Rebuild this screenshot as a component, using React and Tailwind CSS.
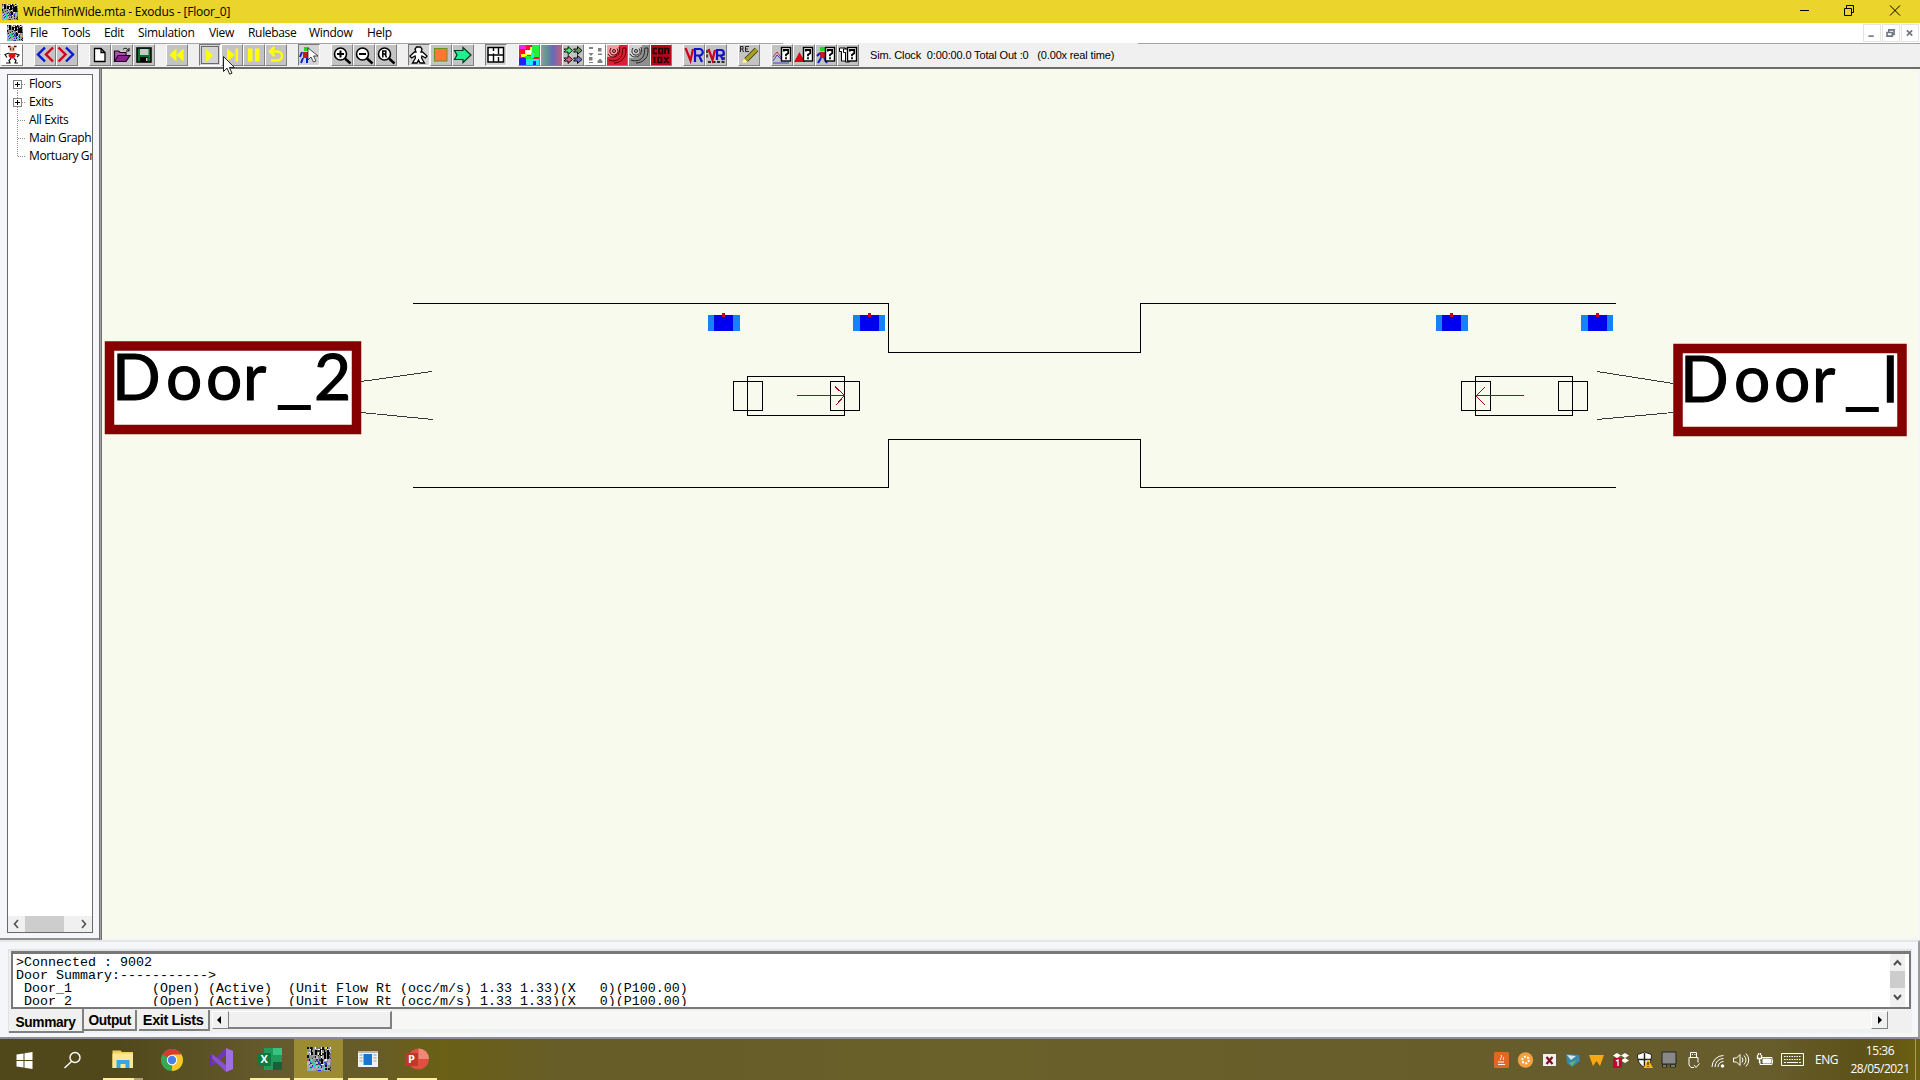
import React from "react";

const NOISE = ["#111", "#888", "#bbb", "#999", "#fff", "#333", "#777", "#aaa", "#a8a8b0", "#909090"];

function ExodusIcon({ size }) {
  const cells = [];
  for (let y = 0; y < 16; y++) {
    for (let x = 0; x < 16; x++) {
      const r = Math.abs(Math.sin(x * 12.9898 + y * 78.233) * 43758.5453);
      const f = r - Math.floor(r);
      let c = NOISE[Math.floor(f * 10)];
      if (y < 4 && x > 5 && f > 0.7) c = "#e8e030";
      if (y > 9 && x < 9 && f < 0.12) c = "#2030e0";
      if (y > 8 && f > 0.88) c = "#20e0c0";
      if (y > 11 && f > 0.3 && f < 0.6) c = "#a0a4ac";
      cells.push(<rect key={x + "-" + y} x={x} y={y} width="1" height="1" fill={c} />);
    }
  }
  return (
    <svg width={size} height={size} viewBox="0 0 16 16" shapeRendering="crispEdges" className="shrink-0">
      {cells}
      <path d="M3 1v4M6 2v3M9 1v5M12 3v5M14 2v6M10 8v3" stroke="#000" strokeWidth="1.2" />
      <path d="M2 9l4 3M4 14l2-3" stroke="#1fd8a8" fill="none" />
      <path d="M7 9l3 4M12 10l1 2" stroke="#2a35ff" fill="none" />
    </svg>
  );
}

const Mag = ({ children }) => (
  <>
    <circle cx="8.5" cy="9" r="6" fill="#fff" stroke="#000" strokeWidth="1.6" />
    <path d="M13 13.5l5.5 5" stroke="#000" strokeWidth="2.4" />
    {children}
  </>
);
const Query = ({ x = 9.5 }) => (
  <>
    <rect x={x} y="2.5" width="9" height="13.500" fill="#fff" stroke="#000" strokeWidth="1.4" />
    <path d={`M${x + 2.3} 6.5v-1.500h4.400v3.200l-2.200 1.500v1.500M${x + 4.5} 12.300v1.900`} stroke="#000" strokeWidth="1.8" fill="none" />
  </>
);
const Spiral = ({ c }) => (
  <g fill="none" stroke={c} strokeWidth="1">
    <circle cx="7" cy="6" r="1.500" />
    <path d="M10 3.500c3 4-1 7-4 6.500s-4-4-2-7M12 2c2 6-2 10-6 10-2 0-4-1-5-3M16 3h3M16 3c-1 3 0 6-2 9s-7 5-12 3M19 3c0 4 0 8-3 11s-6 4-9 4" />
  </g>
);

const ICONS = {
  runner: (
    <>
      <path d="M7.500 1.500h5v5h-5z" fill="#d8a078" />
      <path d="M6 1.500h2.500M12 1.500h2.500M8 4h1M11 4h1" stroke="#400" strokeWidth="1.300" />
      <path d="M7 8h6l.5 3-1.500 2.500H8.500L6.500 11z" fill="#e01020" />
      <path d="M7 8l-4 1.500 2 3M13 8.500l4 1.500-2 2M9 13.500l-2 2 1 2.500H4M12 13.500l2 2-1 2.500h3" stroke="#111" strokeWidth="1.200" fill="none" />
    </>
  ),
  back: (
    <>
      <path d="M10 2.500L3 9.500l7 7" stroke="#0018d8" strokeWidth="2.400" fill="none" />
      <path d="M18 2.500L11 9.500l7 7" stroke="#d00018" strokeWidth="2.400" fill="none" />
    </>
  ),
  fwd: (
    <>
      <path d="M1.500 2.500l7 7-7 7" stroke="#d00018" strokeWidth="2.400" fill="none" />
      <path d="M9 2.500l7 7-7 7" stroke="#0018d8" strokeWidth="2.400" fill="none" />
    </>
  ),
  doc: <path d="M4.500 3.500h6.500l4 4v9h-10.500zM11 3.500v4h4" fill="#fff" stroke="#000" strokeWidth="1.300" />,
  open: (
    <>
      <path d="M2.500 16V6h4l1.500 1.500h6V10" fill="#b050b0" stroke="#200020" strokeWidth="1.200" />
      <path d="M2.500 16.500L6 10.500h12l-4 6z" fill="#8a2090" stroke="#200020" strokeWidth="1.200" />
      <path d="M11 4.500c2-2 4-1.500 5.500 1M17 3v3h-3" stroke="#000" fill="none" />
    </>
  ),
  save: (
    <>
      <rect x="3" y="3" width="14" height="14" fill="#087028" stroke="#000" strokeWidth="1.500" />
      <rect x="6" y="4" width="8.500" height="6" fill="#c8c8c8" />
      <path d="M6 12h8v5H6z" fill="#000" />
      <path d="M12 13h1.500v3H12z" fill="#ccc" />
    </>
  ),
  rew: <path d="M9.500 3.500v13l-7-6.500zM16.500 3.500v13l-7-6.500z" fill="#ffff00" />,
  play: (
    <>
      <rect x="1.500" y="1.500" width="17" height="17" fill="none" stroke="#000" strokeDasharray="1 1" />
      <path d="M6 4l7 6.500-7 6.500z" fill="#ffff00" />
    </>
  ),
  step: <path d="M5 3.500l8 6.500-8 6.500zM13.500 3.500h2.500v13H13.500z" fill="#ffff00" />,
  pause: <path d="M4 3.500h4.500v13H4zM11 3.500h4.500v13H11z" fill="#ffff00" />,
  reload: <path d="M5 6.500h6.500a4.300 4.300 0 010 9H5M8.500 2l-4.500 4.500L8.500 11" fill="none" stroke="#ffff00" strokeWidth="2.600" />,
  pick: (
    <>
      <path d="M5 2h5v4H5z" fill="#20d820" />
      <path d="M4 7h5v6H4z" fill="#d01030" />
      <path d="M3 7l-2 5M4 13l-2 5M8 13v5" stroke="#0020d0" strokeWidth="2" />
      <path d="M9 3v12l3-3 2.500 5 2.500-1-2.500-5H19z" fill="#fff" stroke="#222" strokeWidth=".8" />
    </>
  ),
  zin: <Mag><path d="M5 9h7M8.500 5.500v7" stroke="#000" strokeWidth="2" /></Mag>,
  zout: <Mag><path d="M5 9h7" stroke="#000" strokeWidth="2" /></Mag>,
  zr: <Mag><path d="M6.800 12.500V6h3v3h-3M9 9l1.500 3.500" stroke="#000" strokeWidth="1.500" fill="none" /></Mag>,
  person: (
    <path d="M7.500 2h4l1.500 2-1 3h1.500l4.500 4-1.500 2-3.500-2-.5 2 3 5h-4.500L9.500 15 8 18H3.500l3-5-.5-2-3.500 2L1 11l4.500-4h1.500l-1-3z" fill="#fff" stroke="#000" strokeWidth="1.300" />
  ),
  orange: <rect x="3.500" y="3.500" width="12.500" height="12.500" fill="#ff7830" stroke="#6a9020" strokeWidth="1" />,
  arrow: <path d="M1.500 5.500H10V2.500l8 7.500-8 7.500v-3H1.500L4 10z" fill="#20f090" stroke="#003820" strokeWidth="1.200" />,
  plan: (
    <>
      <rect x="2" y="2.500" width="15.500" height="14.500" fill="#fff" stroke="#000" strokeWidth="1.500" />
      <path d="M2 10h15.500M7.500 2v4M7.500 8.500V17M12.500 2v7M12.500 12v5" stroke="#000" strokeWidth="1.400" />
    </>
  ),
  colors: (
    <>
      <rect width="20" height="20" fill="#ff1030" />
      <path d="M0 0h7v4H0z" fill="#ff20e0" />
      <path d="M6 5h7v5H6zM2 9h6v3H2zM11 2h4v4h-4z" fill="#ffff20" />
      <path d="M13 0h7v12h-7z" fill="#20f040" />
      <path d="M6 11h8v3H6z" fill="#20f040" />
      <path d="M0 14h20v6H0z" fill="#20e8ff" />
      <path d="M12 8h3v5h-3z" fill="#20e8ff" />
      <path d="M0 13h7v7H0zM14 16h3v4h-3z" fill="#2020ff" />
      <path d="M7 5h5v4H7z" fill="#fff" />
    </>
  ),
  grad: (
    <>
      <defs>
        <linearGradient id="spectrum">
          <stop offset="0" stopColor="#a09898" />
          <stop offset=".25" stopColor="#609890" />
          <stop offset=".6" stopColor="#6868b8" />
          <stop offset="1" stopColor="#c06080" />
        </linearGradient>
      </defs>
      <rect width="20" height="20" fill="url(#spectrum)" />
    </>
  ),
  four: (
    <g stroke="#000" strokeWidth=".9">
      <path d="M1 4h4V1.500l4.500 4-4.500 4V7H1l1.500-1.500z" fill="#50e870" />
      <path d="M10.500 4h4V1.500l4.500 4-4.500 4V7h-4l1.500-1.500z" fill="#609860" />
      <path d="M1 13h4v-2.500l4.500 4-4.500 4V16H1l1.500-1.500z" fill="#e06080" />
      <path d="M10.500 13h4v-2.500l4.500 4-4.500 4V16h-4l1.500-1.500z" fill="#7070c8" />
    </g>
  ),
  dots: (
    <>
      <rect width="20" height="20" fill="#fff" />
      <path d="M4 2h4v2H4zM13 3h3.500v3.500H13zM3.500 8h5L6 11zM13 8.500h4V10h-4zM4 12h3.500v3.500H4zM12.500 16l2.500-2.500 2.500 2.500v2h-5zM4 17h4v1H4z" fill="#808080" />
    </>
  ),
  spiralRed: (<><rect width="20" height="20" fill="#d82030" /><path d="M0 0h12v6l-6 6H0z" fill="#f0a0a0" /><Spiral c="#500008" /></>),
  spiralGray: (<><rect width="20" height="20" fill="#909090" /><path d="M0 0h13v7l-6 6H0z" fill="#d0d0d0" /><Spiral c="#222" /></>),
  con: (
    <>
      <rect width="20" height="20" fill="#b80818" />
      <path d="M6 3.500H2.500v5H6M8 3.500h3.500v5H8zM14 9V3.500h3.500V9M2 12.500h1.500V18M7 12.500h3.500v5H7zM13 12l4.500 6M17.500 12L13 18" stroke="#200" strokeWidth="1.700" fill="none" />
    </>
  ),
  vr: (
    <>
      <path d="M1.500 3l5 12.500L9 4" stroke="#d00018" strokeWidth="2.200" fill="none" />
      <path d="M11 17V4h4.500a3 3 0 010 6.500H11M15 10.500l3 6.500" stroke="#1010d0" strokeWidth="2.200" fill="none" />
    </>
  ),
  vr2: (
    <>
      <path d="M2 17h16V8M1 5v8" fill="none" stroke="#000" strokeWidth="1.300" strokeDasharray="3 1.500" />
      <path d="M2.500 4l4 11L9 5" stroke="#d00018" strokeWidth="2.200" fill="none" />
      <path d="M11 15V5h4a2.700 2.700 0 010 5.500h-4M14.500 10l2.500 5" stroke="#1010d0" strokeWidth="2.200" fill="none" />
    </>
  ),
  pen: (
    <>
      <path d="M1.500 7V1.500h2.500v2.500H2M4.500 7L3.500 4M10 1.500H6.500v5H10M6.500 4H9" stroke="#222" fill="none" />
      <path d="M17.500 4.500L7 15" stroke="#303000" strokeWidth="5" />
      <path d="M17.500 4.500L7 15" stroke="#a8a020" strokeWidth="3.500" />
      <path d="M8.500 17L5 13.500 3.500 18z" fill="#ffff90" />
    </>
  ),
  q1: (<><path d="M1 16l4-6 4 4 4 2M1 18h16" stroke="#4040c0" fill="none" /><path d="M1 12l4-5 6 8" stroke="#c03050" fill="none" /><Query /></>),
  q2: (<><path d="M0 17l5.500-10 5.500 10z" fill="#d80818" /><Query /></>),
  q3: (<><path d="M4 2h5v4H4z" fill="#20d820" /><path d="M4 7h5v6H4z" fill="#d01030" /><path d="M4 8l-3 3M5 13l-3 5M8 13l3 5" stroke="#1020c0" strokeWidth="2" /><Query /></>),
  q4: (<><path d="M1.500 3h6v13h-4V6.500h-2z" fill="#fff" stroke="#000" /><path d="M5.500 4h6v13h-4V7.500h-2z" fill="#fff" stroke="#000" /><Query /></>),
};

const GROUPS = [
  ["runner"],
  ["back", "fwd"],
  ["doc", "open", "save"],
  ["rew"],
  ["play*", "step", "pause", "reload"],
  ["pick*"],
  ["zin", "zout", "zr"],
  ["person*", "orange", "arrow"],
  ["plan*"],
  ["colors", "grad", "four", "dots", "spiralRed", "spiralGray", "con"],
  ["vr", "vr2"],
  ["pen"],
  ["q1", "q2", "q3", "q4"],
];

function ToolButton({ name }) {
  const pressed = name.endsWith("*");
  const key = name.replace("*", "");
  const bg = key === "runner" ? "bg-white" : pressed ? "bg-[#d4d4d4]" : "bg-[#c3c3c3]";
  const edge = pressed
    ? "border-t-[#7a7a7a] border-l-[#7a7a7a] border-b-white border-r-white"
    : "border-t-white border-l-white border-b-[#808080] border-r-[#808080]";
  return (
    <div className={`h-[22px] w-[22px] border ${bg} ${edge}`}>
      <svg width="20" height="20" viewBox="0 0 20 20">{ICONS[key]}</svg>
    </div>
  );
}

function Toolbar() {
  return (
    <div className="flex h-[26px] shrink-0 flex-col border-b-2 border-b-[#6c6c6c] bg-[#f0f0f0]">
      <div className="flex h-px justify-between">
        <div className="w-[783px] bg-[#a4a4a4]" />
        <div className="w-[782px] bg-[#a4a4a4]" />
      </div>
      <div className="flex items-center gap-[11px] pl-[1px]">
        {GROUPS.map((g, i) => (
          <div key={i} className="flex">
            {g.map((n) => <ToolButton key={n} name={n} />)}
          </div>
        ))}
        <span className="whitespace-pre font-['Liberation_Sans',sans-serif] text-[11px] leading-[22px] tracking-[-0.15px]">
          {"Sim. Clock  0:00:00.0 Total Out :0   (0.00x real time)"}
        </span>
      </div>
    </div>
  );
}

function TitleBar() {
  return (
    <div className="flex h-[23px] shrink-0 items-center bg-[#ebd42c] pl-[2px]">
      <ExodusIcon size={16} />
      <span className="ml-[5px] text-[12px] leading-[23px] tracking-[-0.22px]">WideThinWide.mta - Exodus - [Floor_0]</span>
      <svg width="120" height="23" className="ml-auto" fill="none" stroke="#000">
        <path d="M0 10.500h9M44.500 8.500h7v7h-7zM46.500 8v-2.500h7v7h-2M90 5.500l10 10M100 5.500l-10 10" />
      </svg>
    </div>
  );
}

const MENU = [
  ["File", "w-[32px]"],
  ["Tools", "w-[42px]"],
  ["Edit", "w-[34px]"],
  ["Simulation", "w-[71px]"],
  ["View", "w-[39px]"],
  ["Rulebase", "w-[61px]"],
  ["Window", "w-[58px]"],
  ["Help", "w-[40px]"],
];

function MenuBar() {
  return (
    <div className="flex h-5 shrink-0 items-center bg-white pl-[7px]">
      <ExodusIcon size={16} />
      <div className="ml-[7px] flex text-[12px] leading-5 tracking-[-0.32px]">
        {MENU.map(([t, w]) => <span key={t} className={w}>{t}</span>)}
      </div>
      <div className="ml-auto flex gap-[1px] pr-[1px]">
        {["M5 12.500h6", "M4.500 8.500h6v4h-6zM6.500 8V5.500h6v5h-2", "M5.500 6l6 6M11.500 6l-6 6"].map((d) => (
          <svg key={d} width="18" height="18" fill="none" className="border border-[#e4e4e4]" stroke="#6c7684" strokeWidth="1.800" viewBox="0 0 18 18">
            <path d={d} />
          </svg>
        ))}
      </div>
    </div>
  );
}

const TREE = [["Floors", true], ["Exits", true], ["All Exits", false], ["Main Graph", false], ["Mortuary Gr", false]];

function Sidebar() {
  return (
    <div className="flex w-[99px] shrink-0 flex-col border-b-2 border-b-[#909090] bg-[#f4f6fa] pt-[5px] pb-[5px] pl-[7px]">
      <div className="flex w-[86px] flex-1 flex-col border border-[#696969] bg-white">
        <div className="flex-1 overflow-hidden">
          {TREE.map(([t, plus], i) => (
            <div key={t} className="flex h-[18px] items-center">
              <svg width="20" height="18" fill="none" shapeRendering="crispEdges" className="shrink-0">
                <path d={i === 0 ? "M9.500 9v9" : i === 4 ? "M9.500 0v9" : "M9.500 0v18"} stroke="#909090" strokeDasharray="1 1" />
                <path d="M10 9.500h8" stroke="#909090" strokeDasharray="1 1" />
                {plus && <rect x="5.500" y="5.500" width="8" height="8" fill="#fff" stroke="#848484" />}
                {plus && <path d="M7 9.500h5M9.500 7v5" stroke="#000" />}
              </svg>
              <span className="whitespace-nowrap pl-[1px] text-[12px] leading-[18px] tracking-[-0.38px]">{t}</span>
            </div>
          ))}
        </div>
        <div className="flex h-[16px] items-center bg-[#f0f0f0]">
          <svg width="17" height="16" fill="none" stroke="#505050" strokeWidth="1.600"><path d="M10 4L6.500 8l3.500 4" /></svg>
          <div className="h-full w-[39px] bg-[#cdcdcd]" />
          <svg width="17" height="16" fill="none" stroke="#505050" strokeWidth="1.600" className="ml-auto"><path d="M7 4l3.500 4L7 12" /></svg>
        </div>
      </div>
    </div>
  );
}

function Sensor({ x, core = 6 }) {
  return (
    <g>
      <rect x={x} y="315" width="32" height="16" fill="#1482f8" />
      <rect x={x + core} y="315" width="19" height="16" fill="#0000f0" />
      <rect x={x + core + 8} y="313" width="3" height="4" fill="#c80020" />
    </g>
  );
}

function Bench({ x }) {
  return (
    <path
      d={`M${x + 0.5} 381.500h29v29h-29zM${x + 14.5} 376.500h97v39h-97zM${x + 97.5} 381.500h29v29h-29z`}
      fill="none"
      stroke="#000"
    />
  );
}

const labelClass = "font-['Lato',sans-serif] text-[64px]";

function FloorPlan() {
  return (
    <svg width="1816" height="869" viewBox="102 69 1816 869" className="block shrink-0 bg-[#f8faee]">
      <g fill="none" stroke="#000" shapeRendering="crispEdges">
        <path d="M413 303.500H888.500V352.500H1140.500V303.500H1616" />
        <path d="M413 487.500H888.500V439.500H1140.500V487.500H1616" />
        <Bench x={733} />
        <Bench x={1461} />
        <path d="M361 381.500L432 371.500M361 412.500L433 419.500M1597 371.500L1673 383.500M1597 419.500L1673 412.500" stroke="#383838" />
        <path d="M797 395.500h47M835 386.500l9.500 9L836 405M1524 395.500h-47M1485 387l-9 9 9 9" stroke="#b00020" />
      </g>
      <Sensor x={708} />
      <Sensor x={853} core={7} />
      <Sensor x={1436} />
      <Sensor x={1581} core={7} />
      <rect x="109.500" y="346" width="247" height="83.500" fill="#fff" stroke="#850000" strokeWidth="9.500" />
      <rect x="1678" y="348.500" width="224" height="83" fill="#fff" stroke="#850000" strokeWidth="9.500" />
      <g fill="#000" stroke="#000" strokeWidth="1.100">
        <text x="112 166 206 243" y="400" className={labelClass}>
          Door<tspan x="275" y="398" strokeWidth="0" className="text-[84px]">_</tspan><tspan x="314" y="400">2</tspan>
        </text>
        <text x="1680 1734 1774 1812" y="402" className={labelClass}>
          Door<tspan x="1843" y="400" strokeWidth="0" className="text-[84px]">_</tspan><tspan x="1883" y="402" strokeWidth="1.500" className="text-[62px]">l</tspan>
        </text>
      </g>
    </svg>
  );
}

const ROW = "(Open) (Active)  (Unit Flow Rt (occ/m/s) 1.33 1.33)(X   0)(P100.00)";

function LogPanel() {
  return (
    <div className="flex h-[99px] shrink-0 flex-col border-t-2 border-r-2 border-b-2 border-t-[#e6e6e6] border-r-[#9a9a9a] border-b-[#8a8d96] bg-[#f4f6fa] pt-[7px] pr-[6px] pl-[8px]">
      <div className="flex h-[84px] flex-col border-t-2 border-l border-[#e2e2e2] bg-[#f0f0f0]">
        <div className="ml-[2px] flex h-[58px] w-[1900px] shrink-0 border-2 border-t-[3px] border-[#787878] bg-white pl-[3px]">
          <pre className="h-[52px] flex-1 overflow-hidden pt-[2px] font-['Liberation_Mono',monospace] text-[13.33px] leading-[13px]">
            {`>Connected : 9002\nDoor Summary:----------->\n Door_1          ${ROW}\n Door_2          ${ROW}`}
          </pre>
          <div className="mr-[4px] flex w-[15px] flex-col items-center bg-[#f0f0f0]">
            <svg width="15" height="17" fill="none" stroke="#505050" strokeWidth="2"><path d="M4 11l3.500-4 3.500 4" /></svg>
            <div className="h-[17px] w-full bg-[#cdcdcd]" />
            <svg width="15" height="17" fill="none" stroke="#505050" strokeWidth="2"><path d="M4 7l3.500 4L11 7" /></svg>
          </div>
        </div>
        <div className="flex items-start font-['Liberation_Sans',sans-serif] text-[14px] font-bold">
          <div className="flex h-[24px] w-[75px] items-center justify-center border-r-2 border-b-2 border-[#808080] pt-[4px] tracking-[-0.4px]">
            <span className="origin-center scale-x-[0.98] scale-y-105">Summary</span>
          </div>
          <div className="mt-[1px] flex h-[21px] w-[53px] items-center justify-center border-r-2 border-b-2 border-[#808080] pt-[1px] tracking-[-0.4px]">
            <span className="scale-x-[0.98] scale-y-105">Output</span>
          </div>
          <div className="mt-[1px] ml-[2px] flex h-[21px] w-[71px] items-center justify-center whitespace-nowrap border-r-2 border-b-2 border-[#808080] pt-[1px] tracking-[-0.4px]">
            <span className="scale-x-[1.04] scale-y-105">Exit Lists</span>
          </div>
          <div className="mt-[2px] ml-[2px] flex h-[18px] w-[1676px] bg-[#f7f7f6]">
            <svg width="17" height="18" className="border border-t-white border-l-white border-r-[#808080] border-b-[#808080] bg-[#f0f0f0]"><path d="M8 4v8L4 8z" /></svg>
            <div className="w-[163px] border-t border-r-2 border-b-2 border-t-white border-r-[#808080] border-b-[#808080] bg-[#f0f0f0]" />
            <svg width="17" height="18" className="ml-auto border border-t-white border-l-white border-r-[#808080] border-b-[#808080] bg-[#f0f0f0]"><path d="M6 4v8l4-4z" /></svg>
          </div>
        </div>
      </div>
    </div>
  );
}

const APPS = {
  win: <path d="M3.500 6.500l7-1v6.500h-7zM11.500 5.300l8-1.300v8h-8zM3.500 13h7v6.500l-7-1zM11.500 13h8v8l-8-1.300z" fill="#fff" />,
  search: (<g fill="none" stroke="#fff" strokeWidth="1.400"><circle cx="13" cy="9.500" r="5" /><path d="M9.500 13.500L2.500 20" /></g>),
  files: (
    <>
      <path d="M1.500 3.500h8l1.500 1.500h11v16h-20.500z" fill="#f5cf58" />
      <path d="M1.500 6.500h20.500v14.500H1.500z" fill="#ffe795" />
      <path d="M5.500 21v-8h13v8h-4v-4h-5v4z" fill="#38a8e0" />
    </>
  ),
  chrome: (
    <>
      <circle cx="12" cy="12" r="11" fill="#38a852" />
      <path d="M12 12L2.500 6.500A11 11 0 0121.500 6.500z" fill="#d83a30" />
      <path d="M12 12L21.500 6.500A11 11 0 0112 23z" fill="#f8c828" />
      <path d="M12 6.500h9.500l-5 9z" fill="#f8c828" />
      <circle cx="12" cy="12" r="5.200" fill="#fff" />
      <circle cx="12" cy="12" r="4.200" fill="#4a7fe8" />
    </>
  ),
  vs: (
    <>
      <path d="M17 0l7 3v18l-7 3z" fill="#a070e0" />
      <path d="M17 0v7L3 18 0 16.500z" fill="#7038b8" />
      <path d="M17 24v-7L3 6 0 7.500z" fill="#8a50d0" />
      <path d="M0 7.500l3-1.500v12L0 16.500z" fill="#6a30b0" />
    </>
  ),
  excel: (
    <>
      <path d="M6 1h18v22H6z" fill="#1f9c5c" />
      <path d="M15 1h9v7h-9z" fill="#38c480" />
      <path d="M15 15h9v8h-9z" fill="#186038" />
      <rect y="6" width="13" height="13" rx="1" fill="#10793f" />
      <text x="2.500" y="16.300" fill="#fff" className="font-['Open_Sans',sans-serif] text-[11px] font-bold">X</text>
    </>
  ),
  window: (
    <>
      <path d="M2 4h20v16H2z" fill="#f2f2f2" />
      <path d="M2 4h20v2H2z" fill="#b8b8b8" />
      <path d="M7.500 7h8.500v11H7.500z" fill="#1478d0" />
      <path d="M3.500 8h3M3.500 11h3M3.500 14h3M17.500 8h3M17.500 11h3M17.500 14h3" stroke="#999" />
    </>
  ),
  ppt: (
    <>
      <circle cx="13.500" cy="12" r="10.500" fill="#e05040" />
      <path d="M13.500 1.500A10.500 10.500 0 0124 12H13.500z" fill="#f08878" />
      <rect y="6" width="13" height="13" rx="1" fill="#c03828" />
      <text x="3" y="16.300" fill="#fff" className="font-['Open_Sans',sans-serif] text-[11px] font-bold">P</text>
    </>
  ),
};

const TASKS = [
  ["win", 0], ["search", 0], ["files", 2], ["chrome", 0], ["vs", 0], ["excel", 1], ["exodus", 3], ["window", 1], ["ppt", 1],
];

const TRAY = [
  ["w-[24px]", <><rect width="15" height="16" rx="1.500" fill="#e06820" /><path d="M4 10h6M4 12.500h7M7 8c-2-2 2-2 0-5M9 8c1-1 0-2 1-3" stroke="#fff" fill="none" /></>],
  ["w-[24px]", <><circle cx="7.500" cy="8" r="7.700" fill="#f0a040" /><circle cx="7.500" cy="8" r="3.300" fill="none" stroke="#fff" strokeWidth="2" strokeDasharray="2 1.400" /></>],
  ["w-[23px]", <><path d="M1 2h13v12H1z" fill="#f4f0f0" /><path d="M4.500 5l6 7M10.500 5l-6 7" stroke="#801020" strokeWidth="2.200" /></>],
  ["w-[24px]", <><path d="M1 2l13 1 1 6-8 6-5-4z" fill="#3888b0" /><path d="M2 3l9 1-5 4z" fill="#d8e8e8" /><path d="M4 11l8-3-5 6z" fill="#60b860" /></>],
  ["w-[24px]", <path d="M0 3h15l-4 11-3.500-5L4 14z" fill="#f8a810" />],
  ["w-[24px]", <><path d="M4 1l4 2.500L4 6 0 3.500zM12 1l4 2.500L12 6 8 3.500zM4 6l4 2.500-4 2.500L0 8.500zM12 6l4 2.500-4 2.500-4-2.500z" fill="#fff" /><rect y="6" width="9" height="10" rx="1" fill="#c00830" /><path d="M3 9l2-1v6" stroke="#fff" strokeWidth="1.300" fill="none" /></>],
  ["w-[25px]", <><path d="M7.500 0l7 2.500c0 7-2 10-7 13-5-3-7-6-7-13z" fill="#fff" stroke="#222" /><path d="M7.500 1v14M1 7.500h13" stroke="#222" strokeWidth="1.500" /><path d="M11 7l5 9H6.500z" fill="#f8b800" /><path d="M11 10v3M11 14v1" stroke="#000" /></>],
  ["w-[25px]", <><path d="M0 0h14v12H0z" fill="#888" stroke="#222" /><path d="M0 14h5M8 14h6" stroke="#222" strokeWidth="3" /><path d="M1 14h3M9 14h4" stroke="#ccc" /></>],
  ["w-[24px]", <g fill="none" stroke="#fff"><path d="M3.500 5.500V.500h6v5M2 5.500h9v5M2 5.500V13l2 2.500h3M5 2.500h1M7.500 2.500h1M7 13l2 2.500 3.500-4" /></g>],
  ["w-[22px]", <g fill="none" stroke="#fff"><path d="M1 15A11.500 11.500 0 0112.500 3.500M4 15a8.500 8.500 0 018.500-8.500M7 15A5.500 5.500 0 0112.500 9.500" /><circle cx="11.500" cy="14" r="1.300" fill="#fff" /></g>],
  ["w-[24px]", <g fill="none" stroke="#fff"><path d="M.500 6h3L7 2.500v11L3.500 10h-3zM9 5.500q2 2.500 0 5M11 3.500q4 4.500 0 9M13 1.500q5.500 6.500 0 13" /></g>],
  ["w-[24px]", <g fill="none" stroke="#fff"><path d="M5 5.500h10v7H3V9M15.500 8v3" /><path d="M6 7h7.500v4H6z" fill="#fff" /><path d="M.500 3v3.500h4V3M1.500 1v2M3.500 1v2M2.500 7v4" strokeWidth="1.300" /></g>],
];

function Taskbar() {
  return (
    <div className="flex h-[41px] shrink-0 bg-[linear-gradient(90deg,#50481b_0%,#50481b_6%,#645a2c_14%,#665c28_19%,#6b6014_23%,#665c28_29%,#6a602a_50%,#675d2c_82%,#675d2c_92%,#5c5118_97%,#6d6010_100%)]">
      {TASKS.map(([k, st]) => (
        <div key={k} className={`flex h-full w-[49px] shrink-0 flex-col items-center ${st === 3 ? "bg-[#9b8b32]" : ""}`}>
          <div className="flex flex-1 items-center">
            {k === "exodus" ? <ExodusIcon size={24} /> : (
              <svg width="24" height="24" viewBox="0 0 24 24">{APPS[k]}</svg>
            )}
          </div>
          {st > 0 && (
            <div className={`flex h-[2px] ${st === 3 ? "w-full" : "w-[40px]"} bg-[#fdf0a0]`}>
              {st === 2 && <div className="ml-auto h-full w-[9px] bg-[#b0a468]" />}
            </div>
          )}
        </div>
      ))}
      <div className="ml-auto flex items-center text-[12px] text-white">
        {TRAY.map(([w, icon], i) => (
          <div key={i} className={w}>
            <svg width="18" height="16" viewBox="0 0 18 16" className="block overflow-visible">{icon}</svg>
          </div>
        ))}
        <svg width="24" height="14" fill="none" stroke="#fff" className="mr-[10px]">
          <path d="M.500 .500h22v12H.500z" />
          <path d="M3 3.500h17M3 6.500h17" strokeDasharray="1.500 1" />
          <path d="M3 9.500h2M6 9.500h11M18 9.500h2" />
        </svg>
        <span className="w-[36px] tracking-[-0.5px]">ENG</span>
        <div className="flex w-[58px] flex-col items-center leading-[18px] tracking-[-0.45px]">
          <span>15:36</span>
          <span>28/05/2021</span>
        </div>
        <div className="mr-[4px] ml-[6px] h-[41px] w-px bg-[#a89c60]" />
      </div>
    </div>
  );
}

export default function App() {
  return (
    <div className="relative flex h-[1080px] w-[1920px] flex-col overflow-hidden bg-[#f4f6fa] font-['Open_Sans','Noto_Sans',sans-serif] text-black">
      <TitleBar />
      <MenuBar />
      <Toolbar />
      <div className="flex h-[871px] shrink-0">
        <Sidebar />
        <div className="w-[3px] shrink-0 border-r border-l border-[#707070] bg-[#a0a0a0]" />
        <FloorPlan />
      </div>
      <LogPanel />
      <Taskbar />
      <svg width="14" height="20" className="absolute top-[56px] left-[223px]">
        <path d="M.500 .500v15l3.500-3.300 2.700 6 2.300-1-2.600-5.700h5z" fill="#fff" stroke="#222" />
      </svg>
    </div>
  );
}
